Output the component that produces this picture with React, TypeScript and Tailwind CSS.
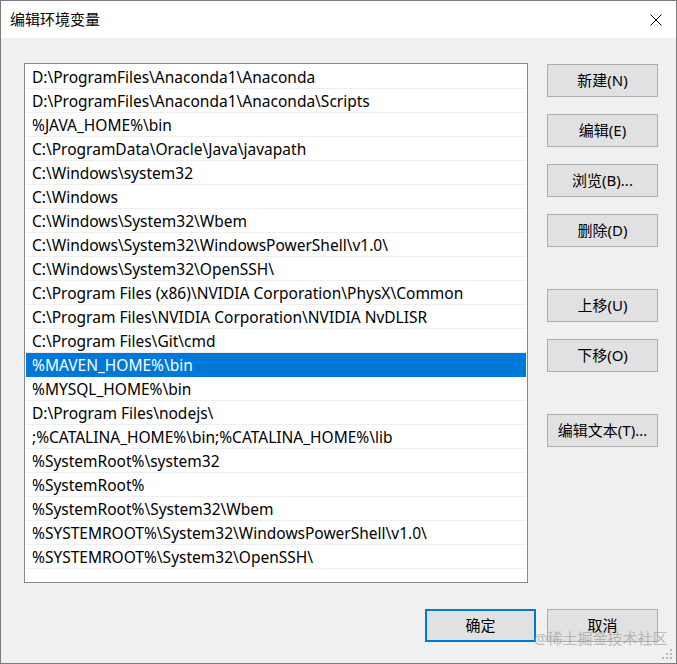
import React from "react";

const rows = [
  "D:\\ProgramFiles\\Anaconda1\\Anaconda",
  "D:\\ProgramFiles\\Anaconda1\\Anaconda\\Scripts",
  "%JAVA_HOME%\\bin",
  "C:\\ProgramData\\Oracle\\Java\\javapath",
  "C:\\Windows\\system32",
  "C:\\Windows",
  "C:\\Windows\\System32\\Wbem",
  "C:\\Windows\\System32\\WindowsPowerShell\\v1.0\\",
  "C:\\Windows\\System32\\OpenSSH\\",
  "C:\\Program Files (x86)\\NVIDIA Corporation\\PhysX\\Common",
  "C:\\Program Files\\NVIDIA Corporation\\NVIDIA NvDLISR",
  "C:\\Program Files\\Git\\cmd",
  "%MAVEN_HOME%\\bin",
  "%MYSQL_HOME%\\bin",
  "D:\\Program Files\\nodejs\\",
  ";%CATALINA_HOME%\\bin;%CATALINA_HOME%\\lib",
  "%SystemRoot%\\system32",
  "%SystemRoot%",
  "%SystemRoot%\\System32\\Wbem",
  "%SYSTEMROOT%\\System32\\WindowsPowerShell\\v1.0\\",
  "%SYSTEMROOT%\\System32\\OpenSSH\\",
];

const FONT = { fontFamily: '"Noto Sans", "Noto Sans CJK SC", sans-serif' };

function Btn({ label, className = "" }: { label: string; className?: string }) {
  return (
    <div
      className={
        "w-[111px] h-[33px] flex items-center justify-center bg-[#e1e1e1] border border-[#adadad] text-[15px] text-black leading-none " +
        className
      }
    >
      {label}
    </div>
  );
}

export default function App() {
  return (
    <div
      className="relative w-[677px] h-[664px] bg-[#f0f0f0] border border-[#7a7a7a] flex flex-col overflow-hidden"
      style={FONT}
    >
      {/* title bar */}
      <div className="h-[37px] bg-white flex items-center justify-between pl-[9px] pr-[14px] shrink-0">
        <span className="text-[15px] text-black">编辑环境变量</span>
        <svg width="12" height="12" viewBox="0 0 12 12" className="mt-[1px]">
          <path d="M0.5 0.5 L11.5 11.5 M11.5 0.5 L0.5 11.5" stroke="#000" strokeWidth="1" />
        </svg>
      </div>

      {/* body */}
      <div className="flex pl-[23px] pt-[25px]">
        <div className="w-[504px] h-[520px] bg-white border border-[#828790] px-[1px] pt-[1px] flex flex-col">
          {rows.map((r, i) => {
            const sel = i === 12;
            return (
              <div
                key={i}
                className={
                  "h-[24px] shrink-0 flex items-center pl-[6px] pt-[2px] text-[15.5px] whitespace-nowrap border-b " +
                  (sel
                    ? "bg-[#0078d7] text-white border-[#0078d7]"
                    : "text-black border-[#efefef]")
                }
              >
                {r}
              </div>
            );
          })}
        </div>
        <div className="ml-[19px] flex flex-col pt-[1px]">
          <Btn label="新建(N)" />
          <Btn label="编辑(E)" className="mt-[17px]" />
          <Btn label="浏览(B)..." className="mt-[17px]" />
          <Btn label="删除(D)" className="mt-[17px]" />
          <Btn label="上移(U)" className="mt-[42px]" />
          <Btn label="下移(O)" className="mt-[17px]" />
          <Btn label="编辑文本(T)..." className="mt-[42px]" />
        </div>
      </div>

      {/* bottom buttons */}
      <div className="flex justify-end gap-[11px] pr-[18px] mt-[26px]">
        <div className="w-[111px] h-[33px] flex items-center justify-center bg-[#e1e1e1] border-2 border-[#0078d7] text-[15px] text-black leading-none">
          确定
        </div>
        <Btn label="取消" />
      </div>

      {/* watermark */}
      <div className="absolute left-[533px] top-[630px] text-[15px] text-[#a0a0a0]/70 leading-none whitespace-nowrap">
        @稀土掘金技术社区
      </div>

      {/* resize grip */}
      <svg
        className="absolute left-[659px] top-[647px]"
        width="15"
        height="15"
        viewBox="0 0 15 15"
      >
        <rect x="10" y="1" width="2" height="2" fill="#b8b8b8" />
        <rect x="6" y="5" width="2" height="2" fill="#b8b8b8" />
        <rect x="10" y="5" width="2" height="2" fill="#b8b8b8" />
        <rect x="2" y="9" width="2" height="2" fill="#b8b8b8" />
        <rect x="6" y="9" width="2" height="2" fill="#b8b8b8" />
        <rect x="10" y="9" width="2" height="2" fill="#b8b8b8" />
      </svg>
    </div>
  );
}
